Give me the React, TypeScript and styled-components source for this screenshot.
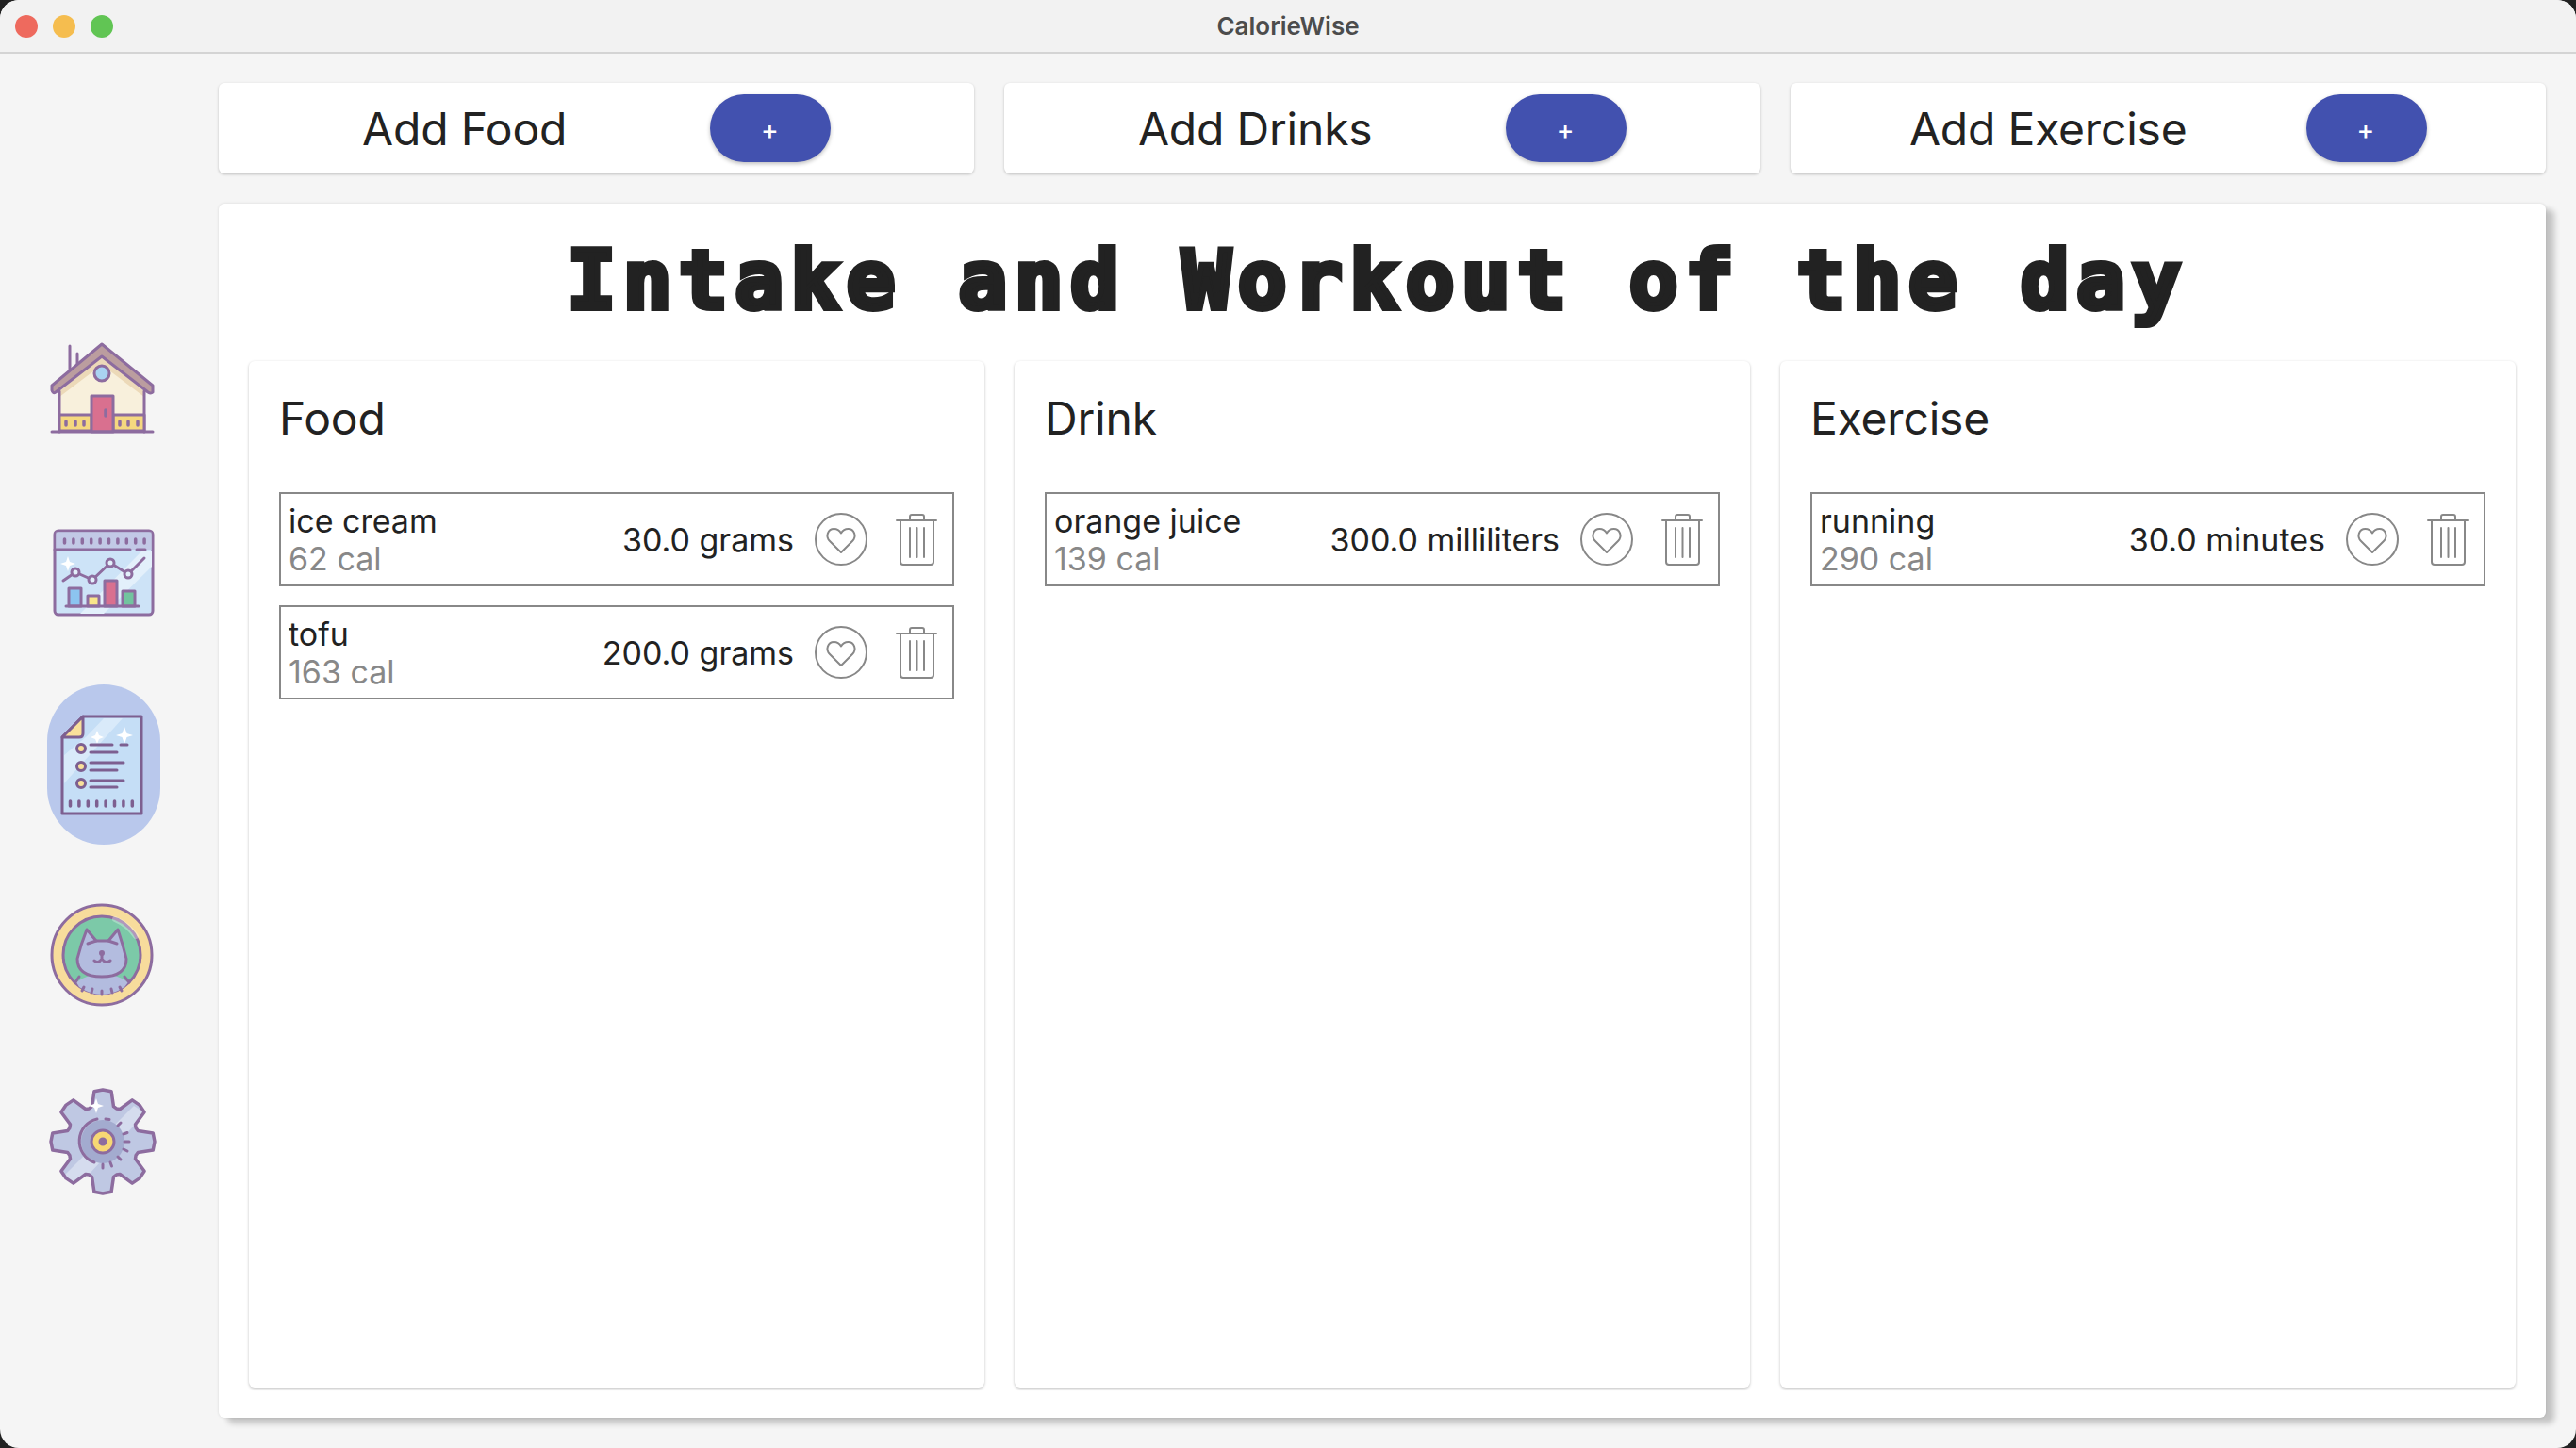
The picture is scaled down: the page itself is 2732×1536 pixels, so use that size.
import React from "react";
import styled, { createGlobalStyle } from "styled-components";

const INK = "#8d6c9f";

interface Entry {
  name: string;
  cal: string;
  amount: string;
}

const columns: { title: string; entries: Entry[] }[] = [
  {
    title: "Food",
    entries: [
      { name: "ice cream", cal: "62 cal", amount: "30.0 grams" },
      { name: "tofu", cal: "163 cal", amount: "200.0 grams" },
    ],
  },
  {
    title: "Drink",
    entries: [{ name: "orange juice", cal: "139 cal", amount: "300.0 milliliters" }],
  },
  {
    title: "Exercise",
    entries: [{ name: "running", cal: "290 cal", amount: "30.0 minutes" }],
  },
];

const GlobalStyle = createGlobalStyle`
  html, body {
    margin: 0;
    padding: 0;
    background: #222222;
  }
  * {
    box-sizing: border-box;
  }
`;

const Window = styled.div`
  width: 2732px;
  height: 1536px;
  border-radius: 20px;
  overflow: hidden;
  background: #f5f5f5;
  display: flex;
  flex-direction: column;
  font-family: Inter, "Liberation Sans", sans-serif;
  color: #222222;
`;

const TitleBar = styled.div`
  height: 57px;
  flex: none;
  background: #f2f2f2;
  border-bottom: 2px solid #d4d4d4;
  display: flex;
  align-items: center;
  justify-content: center;
  position: relative;
  font-size: 26px;
  font-weight: 600;
  color: #4c4c4c;
`;

const Lights = styled.div`
  position: absolute;
  left: 16px;
  top: 16px;
  display: flex;
  gap: 16px;
`;

const Light = styled.span<{ $color: string }>`
  width: 24px;
  height: 24px;
  border-radius: 50%;
  background: ${(p) => p.$color};
`;

const Body = styled.div`
  flex: 1;
  display: flex;
  min-height: 0;
`;

const Sidebar = styled.nav`
  width: 232px;
  flex: none;
  padding: 269px 0 0 50px;
  display: flex;
  flex-direction: column;
  gap: 30px;
`;

const NavItem = styled.div<{ $active?: boolean }>`
  width: 120px;
  height: 170px;
  border-radius: 60px;
  display: flex;
  align-items: center;
  justify-content: center;
  background: ${(p) => (p.$active ? "#b9c8ec" : "transparent")};
  svg {
    filter: blur(0.7px);
  }
`;

const Content = styled.main`
  flex: 1;
  padding: 31px 32px 32px 0;
  display: flex;
  flex-direction: column;
  gap: 32px;
  min-width: 0;
`;

const AddRow = styled.div`
  display: grid;
  grid-template-columns: repeat(3, 1fr);
  gap: 32px;
`;

const AddCard = styled.div`
  height: 96px;
  background: #ffffff;
  border-radius: 6px;
  box-shadow: 0 1px 3px rgba(0, 0, 0, 0.22);
  display: flex;
  align-items: center;
  justify-content: space-evenly;
  font-size: 48px;
  letter-spacing: -0.2px;
`;

const AddButton = styled.button`
  width: 128px;
  height: 72px;
  border: none;
  border-radius: 36px;
  background: #4251af;
  color: #ffffff;
  font-family: Inter, sans-serif;
  font-size: 28px;
  font-weight: 500;
  padding: 4px 2px 0 0;
  box-shadow: 0 2px 4px rgba(0, 0, 0, 0.25);
`;

const Panel = styled.section`
  flex: 1;
  background: #ffffff;
  border-radius: 6px;
  box-shadow: 9px 6px 6px rgba(0, 0, 0, 0.2), 0 0 3px rgba(0, 0, 0, 0.12);
  padding: 0 32px 32px;
  display: flex;
  flex-direction: column;
  min-height: 0;
`;

const Heading = styled.h1`
  margin: 0;
  height: 167px;
  padding: 0 10px 6px 0;
  display: flex;
  align-items: center;
  justify-content: center;
  font-family: "DejaVu Sans Mono", monospace;
  font-weight: 700;
  font-size: 86px;
  letter-spacing: 7.5px;
  color: #222222;
  -webkit-text-stroke: 6px #222222;
  white-space: nowrap;
`;

const Columns = styled.div`
  flex: 1;
  display: grid;
  grid-template-columns: repeat(3, 1fr);
  gap: 32px;
  min-height: 0;
`;

const Column = styled.div`
  background: #ffffff;
  border-radius: 6px;
  box-shadow: 0 1px 3px rgba(0, 0, 0, 0.25);
  padding: 0 32px;
  display: flex;
  flex-direction: column;
  gap: 20px;
`;

const ColumnTitle = styled.h2`
  margin: 0;
  height: 119px;
  padding-top: 2px;
  display: flex;
  align-items: center;
  font-size: 48px;
  font-weight: 400;
  letter-spacing: -0.2px;
`;

const Row = styled.div`
  height: 100px;
  border: 2px solid #888888;
  display: flex;
  align-items: center;
  padding: 0 16px 0 8px;
`;

const RowText = styled.div`
  flex: 1;
  min-width: 0;
  padding-top: 2px;
  display: flex;
  flex-direction: column;
  font-size: 34px;
  line-height: 40px;
`;

const Calories = styled.span`
  color: #888888;
`;

const Amount = styled.span`
  font-size: 34px;
  margin-right: 21px;
  white-space: nowrap;
`;

const HeartButton = styled.span`
  display: flex;
  margin-right: 29px;
`;

function HeartIcon() {
  return (
    <svg width="58" height="58" viewBox="0 0 58 58" fill="none" stroke="#888888" strokeWidth="2">
      <circle cx="29" cy="29" r="27" />
      <path d="M29 43 L17 31 C12 26 15 18 21.5 18 C25 18 27.5 20 29 22.5 C30.5 20 33 18 36.5 18 C43 18 46 26 41 31 Z" strokeLinejoin="round" />
    </svg>
  );
}

function TrashIcon() {
  return (
    <svg width="44" height="56" viewBox="0 0 44 56" fill="none" stroke="#888888" strokeWidth="2" strokeLinecap="round">
      <path d="M1 8 H43" />
      <path d="M15 8 V4 Q15 2 17 2 H28 Q30 2 30 4 V8" />
      <path d="M5 8 V52 Q5 55 8 55 H37 Q40 55 40 52 V8" />
      <path d="M15 16 V47 M22.5 16 V47 M30 16 V47" />
    </svg>
  );
}

function HomeIcon() {
  return (
    <svg width="120" height="120" viewBox="0 0 120 120" fill="none" stroke={INK} strokeWidth="3" strokeLinecap="round" strokeLinejoin="round">
      <path d="M24 16 V42 M32 24 V36" />
      <path d="M13 64 L58 28 L103 64 V107 H13 Z" fill="#f8f0dc" stroke="none" />
      <path d="M13 64 L58 28 L103 64 V70 L58 36 L13 70 Z" fill="#ecd9b8" stroke="none" />
      <path d="M13 64 V107 M103 64 V107" />
      <path d="M13 89 H47 V106 H13 Z M70 89 H103 V106 H70 Z" fill="#f5d87f" />
      <path d="M58 14 L112 58 V65 Q110 67 107 65 L58 27 L9 65 Q6 67 5 63 V58 Z" fill="#bb9d9f" />
      <circle cx="58" cy="45" r="8" fill="#a9d3f2" />
      <rect x="47" y="69" width="23" height="38" fill="#d9708f" />
      <path d="M62 84 V90 M20 96 V100 M30 96 V100 M39 96 V100 M77 96 V100 M86 96 V100 M96 96 V100" strokeWidth="3.5" />
      <path d="M5 107 H112" />
    </svg>
  );
}

function ChartIcon() {
  const ticks = Array.from({ length: 10 }, (_, i) => 18.5 + i * 9.4);
  return (
    <svg width="120" height="120" viewBox="0 0 120 120" fill="none" stroke={INK} strokeWidth="3" strokeLinecap="round" strokeLinejoin="round">
      <rect x="8" y="12" width="104" height="89" rx="4" fill="#cde3f7" />
      <path d="M60 100 L111 50 V34 H100 L35 100 Z" fill="#e3f0fb" stroke="none" />
      <path d="M9.5 13.5 H110.5 V32 H9.5 Z" fill="#c2c9e6" stroke="none" />
      {ticks.map((x) => (
        <path key={x} d={`M${x} 21 V25`} strokeWidth="3.5" />
      ))}
      <path d="M8 32 H88 M95 32 H104" />
      <path d="M17 65 L30 56 L48 64 L67 46 L86 58 L103 41" />
      <circle cx="30" cy="56" r="4" fill="#e3f0fb" />
      <circle cx="48" cy="64" r="4" fill="#e3f0fb" />
      <circle cx="67" cy="46" r="4" fill="#e3f0fb" />
      <circle cx="86" cy="58" r="4" fill="#e3f0fb" />
      <rect x="23" y="73" width="13" height="19" fill="#8cc4f0" />
      <rect x="43" y="81" width="12" height="11" fill="#f9e58a" />
      <rect x="61" y="65" width="13" height="27" fill="#d9708f" />
      <rect x="80" y="76" width="13" height="16" fill="#72c49f" />
      <path d="M20 92 H97" />
      <path d="M22 39 L24 45 L30 47 L24 49 L22 55 L20 49 L14 47 L20 45 Z" fill="#ffffff" stroke="none" />
    </svg>
  );
}

function NoteIcon() {
  const ticks = Array.from({ length: 8 }, (_, i) => 24.5 + i * 9.4);
  return (
    <svg width="120" height="120" viewBox="0 0 120 120" fill="none" stroke="#7d5f90" strokeWidth="3" strokeLinecap="round" strokeLinejoin="round">
      <path d="M38 9 H100 V112 H16 V31 Z" fill="#c5def6" />
      <path d="M42 30 L60 11 H80 L18 80 V50 Z" fill="#d9eafa" stroke="none" />
      <path d="M38 9 V27 Q38 31 34 31 H16 Z" fill="#f9e09a" />
      <path d="M53 24 L55 29 L60 31 L55 33 L53 38 L51 33 L46 31 L51 29 Z M82 20 L84.500 27 L91 29 L84.500 31 L82 38 L79.500 31 L73 29 L79.500 27 Z" fill="#ffffff" stroke="none" />
      <circle cx="36" cy="43" r="4.500" fill="#f9e09a" />
      <circle cx="36" cy="62" r="4.500" fill="#f9e09a" />
      <circle cx="36" cy="80" r="4.500" fill="#f9e09a" />
      <path d="M46 39 H69 M78 39 H85 M46 47 H74 M46 58 H81 M46 66 H74 M46 77 H81 M46 84 H74" />
      {ticks.map((x) => (
        <path key={x} d={`M${x} 99 V104`} strokeWidth="3.500" />
      ))}
    </svg>
  );
}

function CatIcon() {
  return (
    <svg width="120" height="120" viewBox="0 0 120 120" fill="none" stroke={INK} strokeWidth="3" strokeLinecap="round" strokeLinejoin="round">
      <circle cx="58" cy="62" r="53" fill="#f7dc9c" />
      <circle cx="58" cy="62" r="41" fill="#7cc9a8" />
      <path d="M31 91 Q58 72 86 91 L82 96 Q58 112 34 96 Z" fill="#b3bcdf" stroke="none" />
      <path d="M30 91 L34 85 M87 91 L82 85" />
      <path d="M42 35 L52 47 H65 L75 35 Q80 50 84 66 Q84 85 58 85 Q32 85 32 66 Q36 50 42 35 Z" fill="#b3bcdf" />
      <path d="M43 50 L52 47 M65 47 L74 50" />
      <path d="M58 60 V66 M50 68 Q54 72 58 66 Q62 72 67 68" />
      <circle cx="58" cy="60" r="1.500" fill={INK} />
      <path d="M39 96 L37 100 M48 98 L47 102 M58 100 V104 M68 98 L69 102 M77 96 L79 100" />
      <path d="M72 24 Q86 30 94 42" stroke="#ffffff" strokeOpacity="0.3" strokeWidth="6" />
    </svg>
  );
}

// 8 tooth gear outline around the icon centre
function gearPath() {
  const cx = 59;
  const cy = 60;
  const steps: string[] = [];
  for (let i = 0; i < 8; i++) {
    const a = (i * Math.PI) / 4 - Math.PI / 2;
    const pts: [number, number][] = [
      [39, -0.3],
      [54, -0.17],
      [55, 0],
      [54, 0.17],
      [39, 0.3],
      [38, Math.PI / 8],
    ];
    pts.forEach(([r, d]) => {
      steps.push(`${(cx + r * Math.cos(a + d)).toFixed(1)} ${(cy + r * Math.sin(a + d)).toFixed(1)}`);
    });
  }
  return `M${steps.join(" L")} Z`;
}

function GearIcon() {
  const outline = gearPath();
  return (
    <svg width="120" height="120" viewBox="0 0 120 120" fill="none" stroke={INK} strokeWidth="3" strokeLinecap="round" strokeLinejoin="round">
      <defs>
        <clipPath id="gear-clip">
          <path d={outline} />
        </clipPath>
      </defs>
      <path d={outline} fill="#bfc8e3" stroke="none" />
      <path d="M14 100 L92 22 L104 30 L32 108 Z" fill="#d5dcee" stroke="none" clipPath="url(#gear-clip)" />
      <path d={outline} strokeWidth="3.5" />
      <circle cx="59" cy="60" r="23" fill="#a3abcf" stroke="none" />
      <path d="M53 36 A 24 24 0 0 0 50 82" />
      <path d="M62 36 L66 36.500 M75 43 L78 40 M81 52 L85 50.500 M82 60 H87 M81 68 L85 70 M75 76 L78 79 M67 82 L68.500 86 M59 84 V88" />
      <circle cx="59" cy="60" r="12" fill="#f7d774" />
      <circle cx="59" cy="60" r="3" fill={INK} />
      <path d="M40 22 L42 28 L48 30 L42 32 L40 38 L38 32 L32 30 L38 28 Z" transform="translate(12 -8)" fill="#ffffff" stroke="none" />
    </svg>
  );
}

const navIcons = [HomeIcon, ChartIcon, NoteIcon, CatIcon, GearIcon];

function App() {
  return (
    <Window>
      <GlobalStyle />
      <TitleBar>
        <Lights>
          <Light $color="#ee6a5e" />
          <Light $color="#f5bd4f" />
          <Light $color="#61c554" />
        </Lights>
        CalorieWise
      </TitleBar>
      <Body>
        <Sidebar>
          {navIcons.map((Icon, i) => (
            <NavItem key={i} $active={i === 2}>
              <Icon />
            </NavItem>
          ))}
        </Sidebar>
        <Content>
          <AddRow>
            {["Add Food", "Add Drinks", "Add Exercise"].map((label) => (
              <AddCard key={label}>
                <span>{label}</span>
                <AddButton>+</AddButton>
              </AddCard>
            ))}
          </AddRow>
          <Panel>
            <Heading>Intake and Workout of the day</Heading>
            <Columns>
              {columns.map((col) => (
                <Column key={col.title}>
                  <ColumnTitle>{col.title}</ColumnTitle>
                  {col.entries.map((entry) => (
                    <Row key={entry.name}>
                      <RowText>
                        <span>{entry.name}</span>
                        <Calories>{entry.cal}</Calories>
                      </RowText>
                      <Amount>{entry.amount}</Amount>
                      <HeartButton>
                        <HeartIcon />
                      </HeartButton>
                      <TrashIcon />
                    </Row>
                  ))}
                </Column>
              ))}
            </Columns>
          </Panel>
        </Content>
      </Body>
    </Window>
  );
}

export default App;
